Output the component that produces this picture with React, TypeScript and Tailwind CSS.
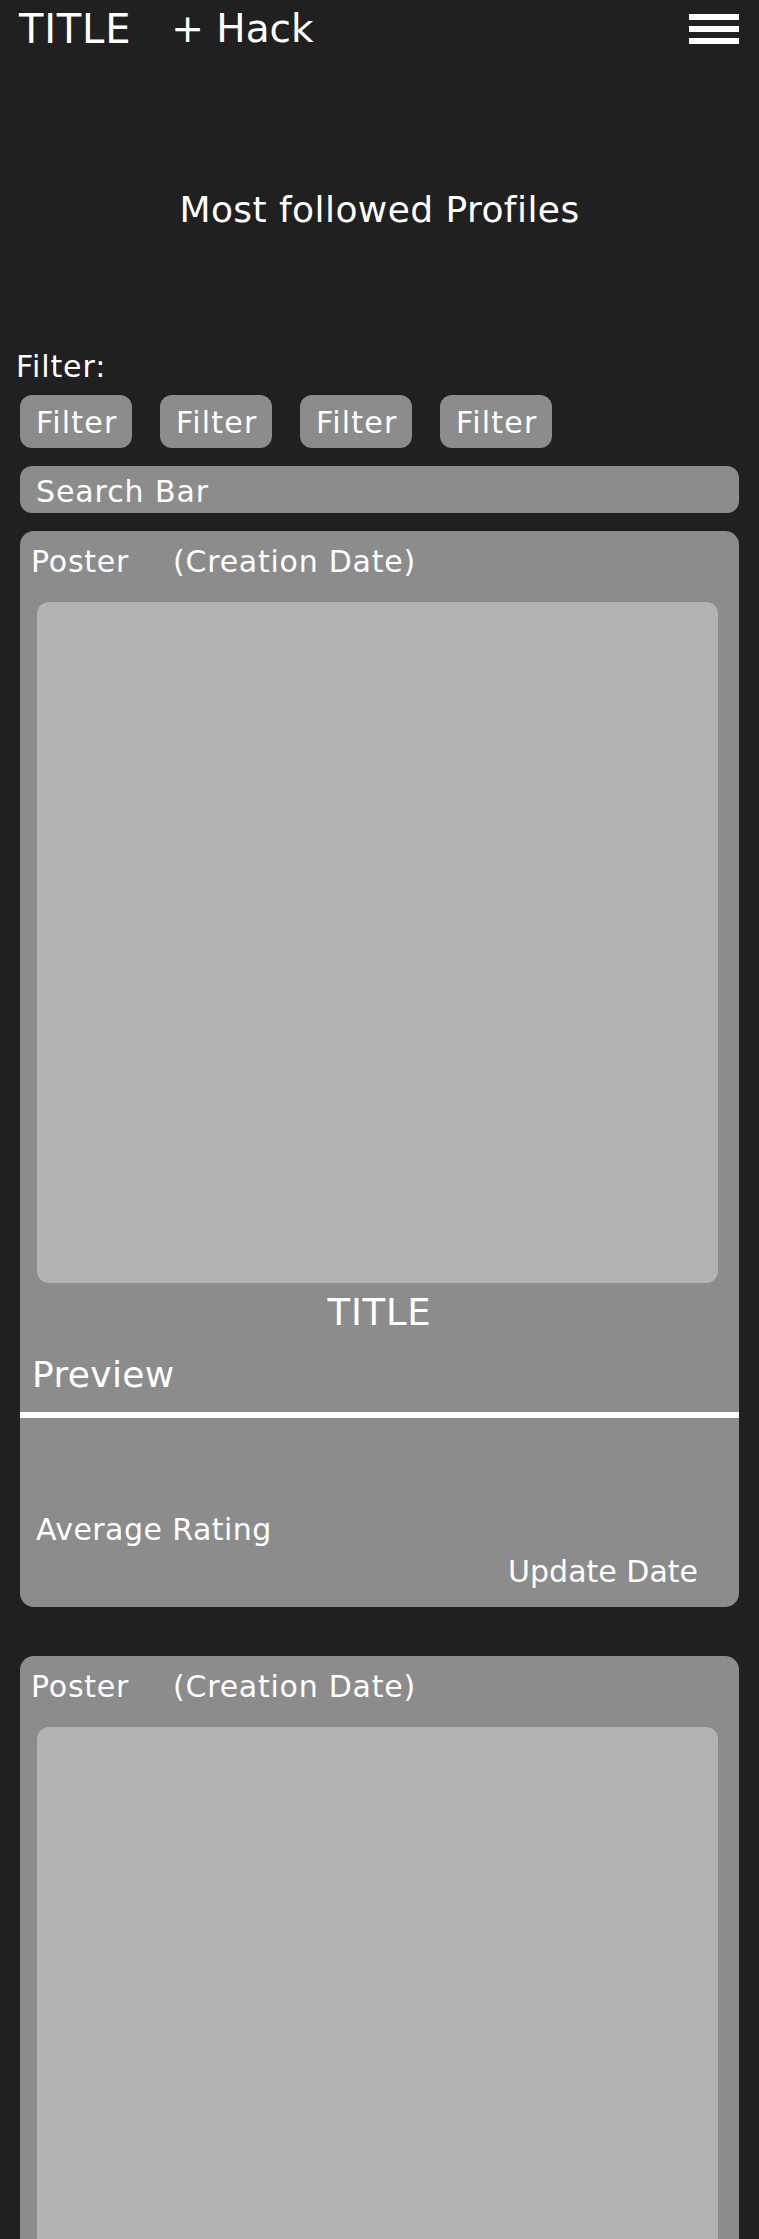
const filters = ["Filter", "Filter", "Filter", "Filter"];

function PostCard() {
  return (
    <div className="mx-[20px] rounded-[14px] bg-[#8c8c8c] pt-[13px] pb-[17px]">
      <div className="flex pl-[11px] text-[30px] leading-[36px] tracking-[0.025em]">
        <span>Poster</span>
        <span className="ml-[44px]">(Creation Date)</span>
      </div>
      <div className="mt-[22px] ml-[17px] h-[681px] w-[681px] rounded-[12px] bg-[#b3b3b3]" />
      <h3 className="mt-[9px] text-center text-[37px] leading-[42px] tracking-[0.02em]">TITLE</h3>
      <h4 className="mt-[20px] pl-[12px] text-[36px] leading-[42px] tracking-[0.01em]">Preview</h4>
      <div className="mt-[16px] h-[6px] bg-white" />
      <p className="mt-[94px] pl-[16px] text-[30px] leading-[36px] tracking-[0.015em]">Average Rating</p>
      <p className="mt-[6px] pr-[41px] text-right text-[30px] leading-[36px]">Update Date</p>
    </div>
  );
}

export default function App() {
  return (
    <div className="min-h-screen bg-[#202020] pb-[40px] font-['DejaVu_Sans',Verdana,sans-serif] text-white">
      <header className="flex items-start justify-between pt-[5px] pr-[20px] pl-[19px]">
        <div className="flex text-[40px] leading-[48px]">
          <span className="tracking-[0.02em]">TITLE</span>
          <span className="ml-[40px] text-[39px]">+ Hack</span>
        </div>
        <button className="mt-[9px] flex w-[50px] flex-col gap-[6px]">
          <span className="h-[6px] w-full bg-white" />
          <span className="h-[6px] w-full bg-white" />
          <span className="h-[6px] w-full bg-white" />
        </button>
      </header>

      <h2 className="mt-[136px] text-center text-[36px] leading-[42px] tracking-[0.012em]">Most followed Profiles</h2>

      <p className="mt-[118px] pl-[16px] text-[30px] leading-[36px] tracking-[0.03em]">Filter:</p>
      <div className="mt-[10px] ml-[20px] flex gap-[28px]">
        {filters.map((f, i) => (
          <div
            key={i}
            className="h-[53px] w-[112px] rounded-[12px] bg-[#8c8c8c] pt-[10px] pl-[16px] text-[30px] leading-[36px] tracking-[0.04em]">
            {f}
          </div>
        ))}
      </div>

      <div className="mx-[20px] mt-[18px] h-[47px] rounded-[12px] bg-[#8c8c8c] pt-[8px] pl-[16px] text-[30px] leading-[36px] tracking-[0.03em]">
        Search Bar
      </div>

      <div className="mt-[18px] flex flex-col gap-[49px]">
        <PostCard />
        <PostCard />
      </div>
    </div>
  );
}
